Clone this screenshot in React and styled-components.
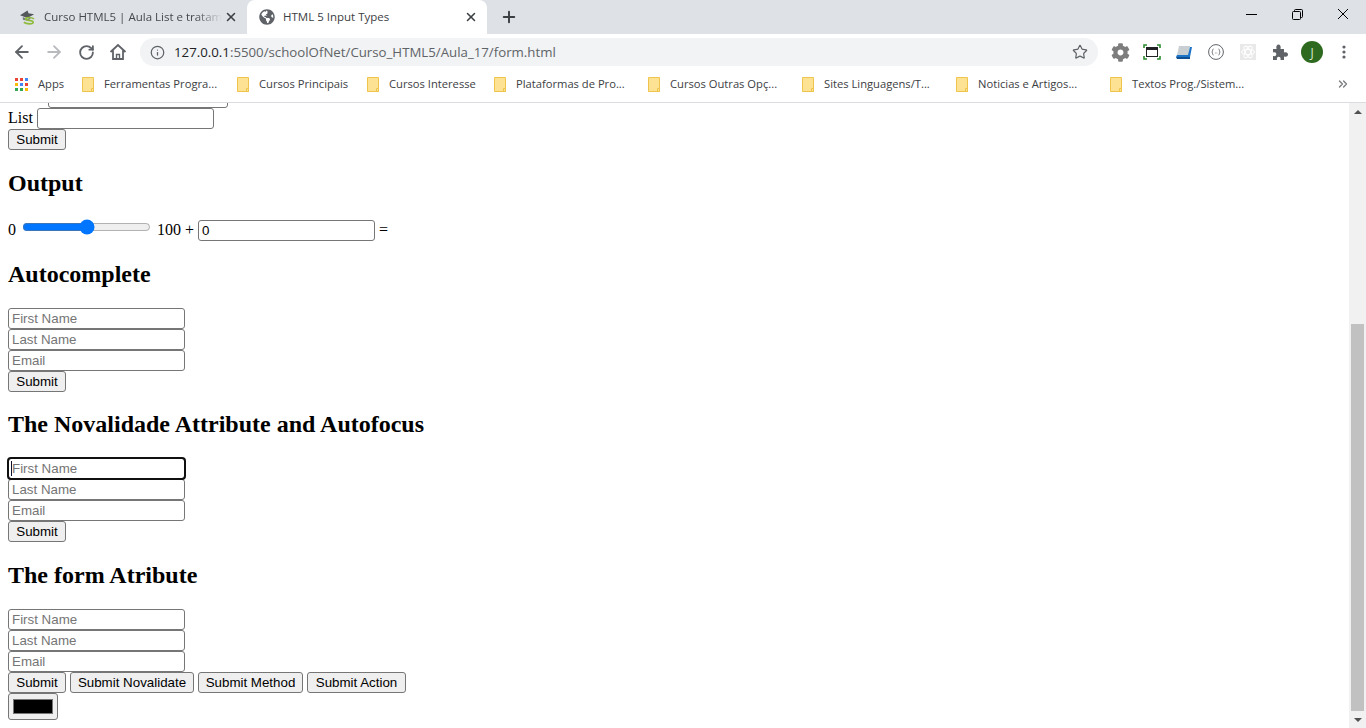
import React from "react";
import styled, { createGlobalStyle } from "styled-components";
import { ArrowLeft, ArrowRight, RotateCw, Info, Star, X, Plus, ChevronsRight } from "lucide-react";
import { FaGlobeAmericas, FaCog } from "react-icons/fa";

const Global = createGlobalStyle`
  html, body { margin: 0; padding: 0; height: 100%; overflow: hidden; background: #fff; }
`;

const Browser = styled.div`
  width: 1366px; height: 728px; display: flex; flex-direction: column; overflow: hidden;
  font-family: "Open Sans", "Noto Sans", sans-serif; color: #3c4043;
`;

/* tab strip */
const TabStrip = styled.div`display: flex; height: 34px; background: #dee1e6; flex: none;`;
const Tab = styled.div`
  width: ${p => p.$w}px; margin-left: ${p => p.$ml || 0}px; display: flex; align-items: center;
  padding-left: 12px; box-sizing: border-box; font-size: 11.5px; position: relative;
  background: ${p => p.$active ? "#fff" : "transparent"};
  border-radius: 8px 8px 0 0; color: ${p => p.$active ? "#3c4043" : "#45484c"};
`;
const TabTitle = styled.span`
  margin: 0 0 1px 8px; width: ${p => p.$w}px; white-space: nowrap; overflow: hidden;
  ${p => p.$fade && "mask-image: linear-gradient(90deg, #000 85%, transparent);"}
`;
const TabClose = styled.span`margin-left: auto; margin-right: 9px; display: flex; color: #3c4043;`;
const NewTab = styled.span`margin-left: 13px; display: flex; align-items: center; color: #3c4043;`;
const WinButtons = styled.div`margin-left: auto; display: flex;`;
const WinButton = styled.span`width: 46px; height: 28px; display: flex; align-items: center; justify-content: center;`;

/* toolbar */
const Toolbar = styled.div`display: flex; align-items: center; height: 36px; background: #fff; padding-left: 6px; flex: none;`;
const NavIcon = styled.span`width: 32px; height: 32px; display: flex; align-items: center; justify-content: center; color: ${p => p.$off ? "#b8babd" : "#5f6368"};`;
const UrlPill = styled.div`
  width: 958px; height: 28px; margin-left: 6px; border-radius: 14px; background: #f1f3f4;
  display: flex; align-items: center; padding: 0 10px; box-sizing: border-box; color: #5f6368;
`;
const UrlText = styled.span`margin-left: 9px; font-size: 13.25px; color: #5f6368; white-space: nowrap;`;
const UrlHost = styled.span`color: #202124;`;
const StarWrap = styled.span`margin-left: auto; display: flex;`;
const ExtIcons = styled.div`display: flex; margin-left: 6px;`;
const ExtIcon = styled.span`width: 32px; height: 32px; display: flex; align-items: center; justify-content: center; color: #5f6368;`;
const Avatar = styled.span`
  width: 22px; height: 22px; border-radius: 50%; background: #2d6a1f; color: #d9e8d3;
  font-size: 12px; display: flex; align-items: center; justify-content: center;
`;

/* bookmarks */
const Bookmarks = styled.div`
  display: flex; align-items: center; height: 28px; padding: 0 0 4px 15px; background: #fff; flex: none;
  border-bottom: 1px solid #dadce0;
`;
const AppsItem = styled.div`width: 67px; display: flex; align-items: center; font-size: 11.2px;`;
const Bookmark = styled.div`width: ${p => p.$w}px; flex: none; display: flex; align-items: center; font-size: 11.2px; white-space: nowrap;`;
const BookmarkLabel = styled.span`margin: 0 0 2px 10px;`;
const More = styled.span`margin-left: auto; margin-right: 16px; display: flex; color: #7b7e82;`;

/* page */
const Viewport = styled.div`flex: 1; min-height: 0; display: flex; background: #fff;`;
const Doc = styled.div`
  flex: 1; min-width: 0; overflow: hidden; padding: 0 8px;
  font-family: "Liberation Serif", "Times New Roman", serif; font-size: 16px; color: #000;
`;
const Heading = styled.h2`
  font-size: 24px; font-weight: 700; color: #000;
  margin: ${p => p.$tight ? "19px 0 20.84px" : "19.92px 0"};
`;
const Field = styled.input`
  width: 177px; height: 21px; box-sizing: border-box; padding: 1px 3px; border: 1px solid #767676;
  border-radius: 3px; font: 13.3333px "Liberation Sans", Arial, sans-serif; color: #000; background: #fff;
  display: ${p => p.$block ? "block" : "inline-block"};
  &::placeholder { color: #757575; opacity: 1; }
  ${p => p.$focused && `
    outline: 2px solid #101010; outline-offset: -1px;
    background: linear-gradient(#101030, #101030) 2px 2px / 1px 15px no-repeat #fff;
  `}
`;
const CutField = styled(Field)`width: 180px; margin: -16px 0 0 40px; display: block;`;
const SubmitButton = styled.button`
  width: ${p => p.$w || 58}px; height: 21px; padding: 1px 0; box-sizing: border-box;
  border: 1px solid #767676; border-radius: 3px;
  background: #efefef; color: #000; font: 13.3333px "Liberation Sans", Arial, sans-serif; display: block; flex: none;
`;
const ButtonRow = styled.div`display: flex; gap: 4px;`;
const Slider = styled.input`accent-color: #0075ff; margin: 2px 2px 1px;`;
const ColorInput = styled.input`
  display: block; width: 50px; height: 27px; padding: 1px 2px; box-sizing: border-box;
  border: 1px solid #767676; border-radius: 3px; background: #efefef;
  &::-webkit-color-swatch-wrapper { padding: 4px 2px; }
  &::-webkit-color-swatch { border: 1px solid #767676; border-radius: 0; }
`;

/* scrollbar */
const Scrollbar = styled.div`width: 17px; flex: none; background: #f1f1f1; display: flex; flex-direction: column; align-items: center;`;
const ScrollArrow = styled.span`
  height: 17px; flex: none; display: flex; align-items: center; justify-content: center;
  &::before {
    content: ""; border-left: 4px solid transparent; border-right: 4px solid transparent;
    ${p => p.$down ? "border-top: 4px solid #505050;" : "border-bottom: 4px solid #505050;"}
  }
`;
const ScrollGap = styled.div`flex: 1;`;
const ScrollThumb = styled.div`width: 13px; height: 387px; background: #c1c1c1; flex: none;`;

const SchoolIcon = () => (
  <svg width="16" height="17" viewBox="0 0 17 17">
    <path d="M0 6 8 1l1 3 6 1-7 4z" fill="#55585a" />
    <path d="M3 8v3l5 1 3-2V8L8 10z" fill="#7a7d7f" />
    <path d="M15 10c-3-2-9-2-9 0 0 2 8 1 8 3.500s-7 2-10 0" fill="none" stroke="#8fbb3c" strokeWidth="1.8" />
  </svg>
);

const AppsIcon = () => {
  const colors = ["#ea4335", "#ea4335", "#4285f4", "#fbbc04", "#4285f4", "#ea4335", "#34a853", "#34a853", "#fbbc04"];
  return (
    <svg width="13" height="13" viewBox="0 0 13 13">
      {colors.map((c, i) => <rect key={i} x={(i % 3) * 5} y={Math.floor(i / 3) * 5} width="3" height="3" fill={c} />)}
    </svg>
  );
};

const Folder = () => (
  <svg width="12" height="15" viewBox="0 0 12 15">
    <path d="M.5.5h11v14H.5z" fill="#fde293" stroke="#eec44c" />
    <path d="M9.500 11.500h2v3h-2z" fill="#fde293" stroke="#eec44c" />
  </svg>
);

const HomeIcon = () => (
  <svg width="18" height="18" viewBox="0 0 18 18" fill="none" stroke="#5f6368" strokeWidth="1.8">
    <path d="M1.500 9 9 2l7.500 7M4 7.500V16h10V7.500" />
    <path d="M7.500 16v-4.500h3V16" strokeWidth="1.400" />
  </svg>
);

const FrameIcon = () => (
  <svg width="18" height="16" viewBox="0 0 18 16" fill="none">
    <path d="M1 4V1h3M14 1h3v3M1 12v3h3M14 15h3v-3" stroke="#2e8b32" strokeWidth="1.6" />
    <rect x="3.500" y="3.500" width="11" height="9" stroke="#202124" />
    <path d="M3.500 5h11" stroke="#202124" strokeWidth="2" />
  </svg>
);

const BookIcon = () => (
  <svg width="16" height="15" viewBox="0 0 16 15">
    <path d="M3 1h11l-1 9H1z" fill="#c9ced3" />
    <path d="M14 2h2l-2 10H0l1-2h11z" fill="#1b74c8" />
    <path d="M0 12h14v2H1z" fill="#0f4f94" />
  </svg>
);

const BracesIcon = () => (
  <svg width="16" height="16" viewBox="0 0 16 16" fill="none" stroke="#5f6368">
    <circle cx="8" cy="8" r="7.400" />
    <path d="M5.500 5C4 5 5 8 3.800 8 5 8 4 11 5.500 11M10.500 5C12 5 11 8 12.200 8 11 8 12 11 10.500 11" strokeWidth=".9" />
    <path d="M7 9h.6M8.600 9h.6" strokeWidth=".9" />
  </svg>
);

const AtomIcon = () => (
  <svg width="16" height="16" viewBox="0 0 16 16" fill="none">
    <rect width="16" height="16" fill="#e9e9e9" />
    <g stroke="#fff">
      <ellipse cx="8" cy="8" rx="6.500" ry="2.600" />
      <ellipse cx="8" cy="8" rx="6.500" ry="2.600" transform="rotate(60 8 8)" />
      <ellipse cx="8" cy="8" rx="6.500" ry="2.600" transform="rotate(120 8 8)" />
    </g>
  </svg>
);

const PuzzleIcon = () => (
  <svg width="16" height="16" viewBox="0 0 16 16" fill="#5f6368">
    <path d="M1 5h3.500c-.8-3 .6-4.500 2-4.500S9.300 2 8.500 5H12v3.500c3-.8 4 .6 4 2s-1 2.800-4 2V16H8.500c.6-2.500-.6-3.300-1.800-3.300S4.400 13.500 5 16H1v-4c2.500.6 3.300-.6 3.300-1.800S3.500 7.900 1 8.500z" />
  </svg>
);

const Kebab = () => (
  <svg width="4" height="14" viewBox="0 0 4 14" fill="#5f6368">
    <circle cx="2" cy="2" r="1.600" /><circle cx="2" cy="7" r="1.600" /><circle cx="2" cy="12" r="1.600" />
  </svg>
);

const NameFields = ({ focus }) => (
  <>
    <Field $block $focused={focus} placeholder="First Name" />
    <Field $block placeholder="Last Name" />
    <Field $block placeholder="Email" />
  </>
);

const bookmarks = [
  ["Ferramentas Progra...", 155],
  ["Cursos Principais", 130],
  ["Cursos Interesse", 127],
  ["Plataformas de Pro...", 154],
  ["Cursos Outras Opç...", 154],
  ["Sites Linguagens/T...", 154],
  ["Noticias e Artigos...", 154],
  ["Textos Prog./Sistem...", 154],
];

export default function App() {
  return (
    <Browser>
      <Global />
      <TabStrip>
        <Tab $w={239} $ml={8}>
          <SchoolIcon />
          <TabTitle $w={178} $fade>Curso HTML5 | Aula List e tratam</TabTitle>
          <TabClose><X size={14} strokeWidth={2.6} /></TabClose>
        </Tab>
        <Tab $w={240} $active>
          <FaGlobeAmericas size={16} color="#5f6368" />
          <TabTitle $w={170}>HTML 5 Input Types</TabTitle>
          <TabClose><X size={14} strokeWidth={2.6} /></TabClose>
        </Tab>
        <NewTab><Plus size={18} strokeWidth={2.6} /></NewTab>
        <WinButtons>
          <WinButton>
            <svg width="11" height="11" viewBox="0 0 11 11"><path d="M0 5.500h11" stroke="#000" /></svg>
          </WinButton>
          <WinButton>
            <svg width="11" height="11" viewBox="0 0 11 11" fill="none" stroke="#000">
              <rect x=".5" y="2.500" width="8" height="8" rx="1" /><path d="M2.500 2.500v-1a1 1 0 0 1 1-1h6a1 1 0 0 1 1 1v6a1 1 0 0 1-1 1h-1" />
            </svg>
          </WinButton>
          <WinButton>
            <svg width="12" height="12" viewBox="0 0 12 12"><path d="M1 1l10 10M11 1 1 11" stroke="#000" /></svg>
          </WinButton>
        </WinButtons>
      </TabStrip>

      <Toolbar>
        <NavIcon><ArrowLeft size={20} strokeWidth={2.2} /></NavIcon>
        <NavIcon $off><ArrowRight size={20} strokeWidth={2.2} /></NavIcon>
        <NavIcon><RotateCw size={17} strokeWidth={2.6} /></NavIcon>
        <NavIcon><HomeIcon /></NavIcon>
        <UrlPill>
          <Info size={15} strokeWidth={2} />
          <UrlText><UrlHost>127.0.0.1</UrlHost>:5500/schoolOfNet/Curso_HTML5/Aula_17/form.html</UrlText>
          <StarWrap><Star size={16} strokeWidth={1.8} /></StarWrap>
        </UrlPill>
        <ExtIcons>
          <ExtIcon><FaCog size={19} color="#7d7d7d" /></ExtIcon>
          <ExtIcon><FrameIcon /></ExtIcon>
          <ExtIcon><BookIcon /></ExtIcon>
          <ExtIcon><BracesIcon /></ExtIcon>
          <ExtIcon><AtomIcon /></ExtIcon>
          <ExtIcon><PuzzleIcon /></ExtIcon>
          <ExtIcon><Avatar>J</Avatar></ExtIcon>
          <ExtIcon><Kebab /></ExtIcon>
        </ExtIcons>
      </Toolbar>

      <Bookmarks>
        <AppsItem><AppsIcon /><BookmarkLabel>Apps</BookmarkLabel></AppsItem>
        {bookmarks.map(([label, w]) => (
          <Bookmark key={label} $w={w}>
            <Folder />
            <BookmarkLabel>{label}</BookmarkLabel>
          </Bookmark>
        ))}
        <More><ChevronsRight size={14} strokeWidth={2.4} /></More>
      </Bookmarks>

      <Viewport>
        <Doc>
          <CutField />
          <div>List <Field /></div>
          <SubmitButton>Submit</SubmitButton>

          <Heading>Output</Heading>
          <div>
            0 <Slider type="range" min="0" max="100" defaultValue="50" /> 100 + <Field defaultValue="0" /> =
          </div>

          <Heading>Autocomplete</Heading>
          <NameFields />
          <SubmitButton>Submit</SubmitButton>

          <Heading $tight>The Novalidade Attribute and Autofocus</Heading>
          <NameFields focus />
          <SubmitButton>Submit</SubmitButton>

          <Heading>The form Atribute</Heading>
          <NameFields />
          <ButtonRow>
            <SubmitButton>Submit</SubmitButton>
            <SubmitButton $w={124}>Submit Novalidate</SubmitButton>
            <SubmitButton $w={105}>Submit Method</SubmitButton>
            <SubmitButton $w={99}>Submit Action</SubmitButton>
          </ButtonRow>
          <ColorInput type="color" defaultValue="#000000" />
        </Doc>
        <Scrollbar>
          <ScrollArrow />
          <ScrollGap />
          <ScrollThumb />
          <ScrollArrow $down />
        </Scrollbar>
      </Viewport>
    </Browser>
  );
}
